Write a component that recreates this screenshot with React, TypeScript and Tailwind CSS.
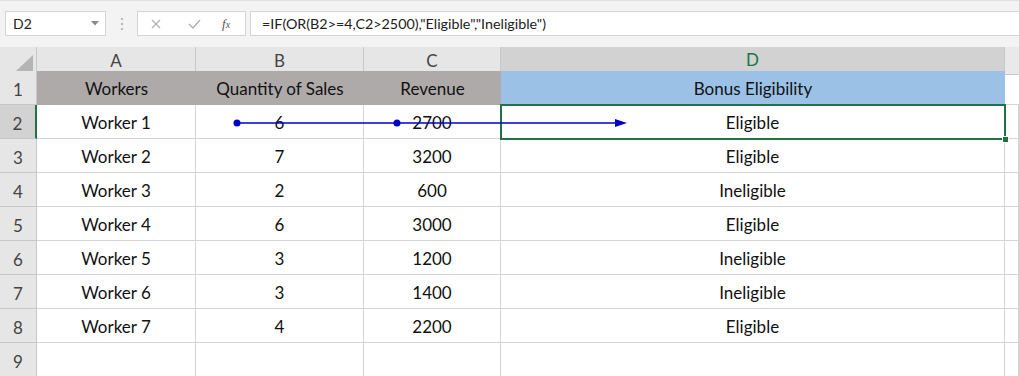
import React from 'react';

const font = { fontFamily: 'Lato, "Open Sans", sans-serif' };

const rows = [
  ['Worker 1', '6', '2700', 'Eligible'],
  ['Worker 2', '7', '3200', 'Eligible'],
  ['Worker 3', '2', '600', 'Ineligible'],
  ['Worker 4', '6', '3000', 'Eligible'],
  ['Worker 5', '3', '1200', 'Ineligible'],
  ['Worker 6', '3', '1400', 'Ineligible'],
  ['Worker 7', '4', '2200', 'Eligible'],
];

const cols = 'grid grid-cols-[37px_159px_168px_137px_504px_1fr]';

const FormulaBar: React.FC = () => (
  <div className="h-[47px] bg-[#f3f3f3] border-t border-[#e0e0e0] flex items-start pt-[10px] pl-[5px]">
    <div className="w-[101px] h-[25px] bg-white border border-[#d4d4d4] flex items-center justify-between pl-[7px] pr-[6px] text-[14px] text-[#222]">
      <span>D2</span>
      <svg width="8" height="5" viewBox="0 0 8 5">
        <path d="M0 0 L8 0 L4 4.5 Z" fill="#8a8a8a" />
      </svg>
    </div>
    <div className="w-[31px] h-[25px] flex flex-col items-center justify-center gap-[3px]">
      <span className="w-[2px] h-[2px] bg-[#b8b8b8]" />
      <span className="w-[2px] h-[2px] bg-[#b8b8b8]" />
      <span className="w-[2px] h-[2px] bg-[#b8b8b8]" />
    </div>
    <div className="w-[109px] h-[25px] bg-white border border-[#d4d4d4] flex items-center">
      <svg className="ml-[13px]" width="10" height="10" viewBox="0 0 10 10">
        <path d="M1 1 L9 9 M9 1 L1 9" stroke="#b0b0b0" strokeWidth="1.3" />
      </svg>
      <svg className="ml-[27px]" width="13" height="10" viewBox="0 0 13 10">
        <path d="M1 5 L5 9 L12 1" stroke="#b0b0b0" strokeWidth="1.4" fill="none" />
      </svg>
      <span className="ml-[21px] text-[13px] italic text-[#555]" style={{ fontFamily: '"Liberation Serif", serif' }}>
        f<span className="text-[10px]">x</span>
      </span>
    </div>
    <div className="ml-[4px] flex-1 h-[25px] bg-white border-y border-l border-[#d4d4d4] flex items-center pl-[11px] text-[14.3px] text-[#222]">
      =IF(OR(B2&gt;=4,C2&gt;2500),"Eligible","Ineligible")
    </div>
  </div>
);

const ColHeaders: React.FC = () => (
  <div className={`${cols} h-[24px] text-[17px] text-[#444]`}>
    <div className="bg-[#e6e6e6] border-r border-b border-[#c8c8c8] flex items-end justify-end pr-[3px] pb-[3px]">
      <svg width="17" height="16" viewBox="0 0 17 16">
        <path d="M17 0 L17 16 L0 16 Z" fill="#b4b4b4" />
      </svg>
    </div>
    {['A', 'B', 'C'].map((c) => (
      <div key={c} className="bg-[#e6e6e6] border-r border-b border-[#c8c8c8] flex items-center justify-center">
        {c}
      </div>
    ))}
    <div className="bg-[#d2d2d2] border-r border-[#c8c8c8] border-b-2 border-b-[#217346] flex items-center justify-center text-[#217346]">
      D
    </div>
    <div className="bg-[#e9e9e9] border-b border-[#c8c8c8]" />
  </div>
);

const RowHead: React.FC<{ n: number; active?: boolean }> = ({ n, active }) => (
  <div
    className={
      active
        ? 'bg-[#d2d2d2] border-r-2 border-r-[#217346] border-b border-b-[#c8c8c8] flex items-end justify-center pb-[2px] text-[17px] text-[#444]'
        : 'bg-[#e6e6e6] border-r border-b border-[#c8c8c8] flex items-end justify-center pb-[2px] text-[17px] text-[#444]'
    }
  >
    {n}
  </div>
);

const Cell: React.FC<{ children?: React.ReactNode }> = ({ children }) => (
  <div className="border-r border-b border-[#d4d4d4] flex items-center justify-center pt-[2px] text-[17px] text-[#111]">
    {children}
  </div>
);

export default function App() {
  return (
    <div className="w-[1019px] h-[376px] overflow-hidden bg-white" style={font}>
      <FormulaBar />
      <ColHeaders />
      <div className="relative">
        <div className={`${cols} h-[34px]`}>
          <RowHead n={1} />
          <div className="bg-[#aeaaaa] flex items-center justify-center pt-[2px] text-[17px] text-[#111]">Workers</div>
          <div className="bg-[#aeaaaa] flex items-center justify-center pt-[2px] text-[17px] text-[#111]">Quantity of Sales</div>
          <div className="bg-[#aeaaaa] flex items-center justify-center pt-[2px] text-[17px] text-[#111]">Revenue</div>
          <div className="bg-[#9bc2e6] flex items-center justify-center pt-[2px] text-[17px] text-[#111]">Bonus Eligibility</div>
          <div className="border-b border-[#d4d4d4]" />
        </div>
        {rows.map((r, i) => (
          <div key={i} className={`${cols} h-[34px]`}>
            <RowHead n={i + 2} active={i === 0} />
            {r.map((v, j) => (
              <Cell key={j}>{v}</Cell>
            ))}
            <Cell />
          </div>
        ))}
        <div className={`${cols} h-[34px]`}>
          <RowHead n={9} />
          <Cell />
          <Cell />
          <Cell />
          <Cell />
          <Cell />
        </div>

        {/* selection around D2 */}
        <div className="absolute left-[500px] top-[33px] w-[506px] h-[36px] border-2 border-[#217346]" />
        <div className="absolute left-[1002px] top-[65px] w-[7px] h-[7px] bg-[#217346] border border-white" />

        {/* trace precedents arrows */}
        <svg className="absolute left-0 top-0 pointer-events-none" width="1019" height="80">
          <line x1="237" y1="52" x2="618" y2="52" stroke="#0000c8" strokeWidth="1.4" />
          <circle cx="237" cy="52" r="3.5" fill="#0000c8" />
          <circle cx="397" cy="52" r="3.5" fill="#0000c8" />
          <path d="M615 48 L627 52 L615 56 Z" fill="#0000c8" />
        </svg>
      </div>
    </div>
  );
}
